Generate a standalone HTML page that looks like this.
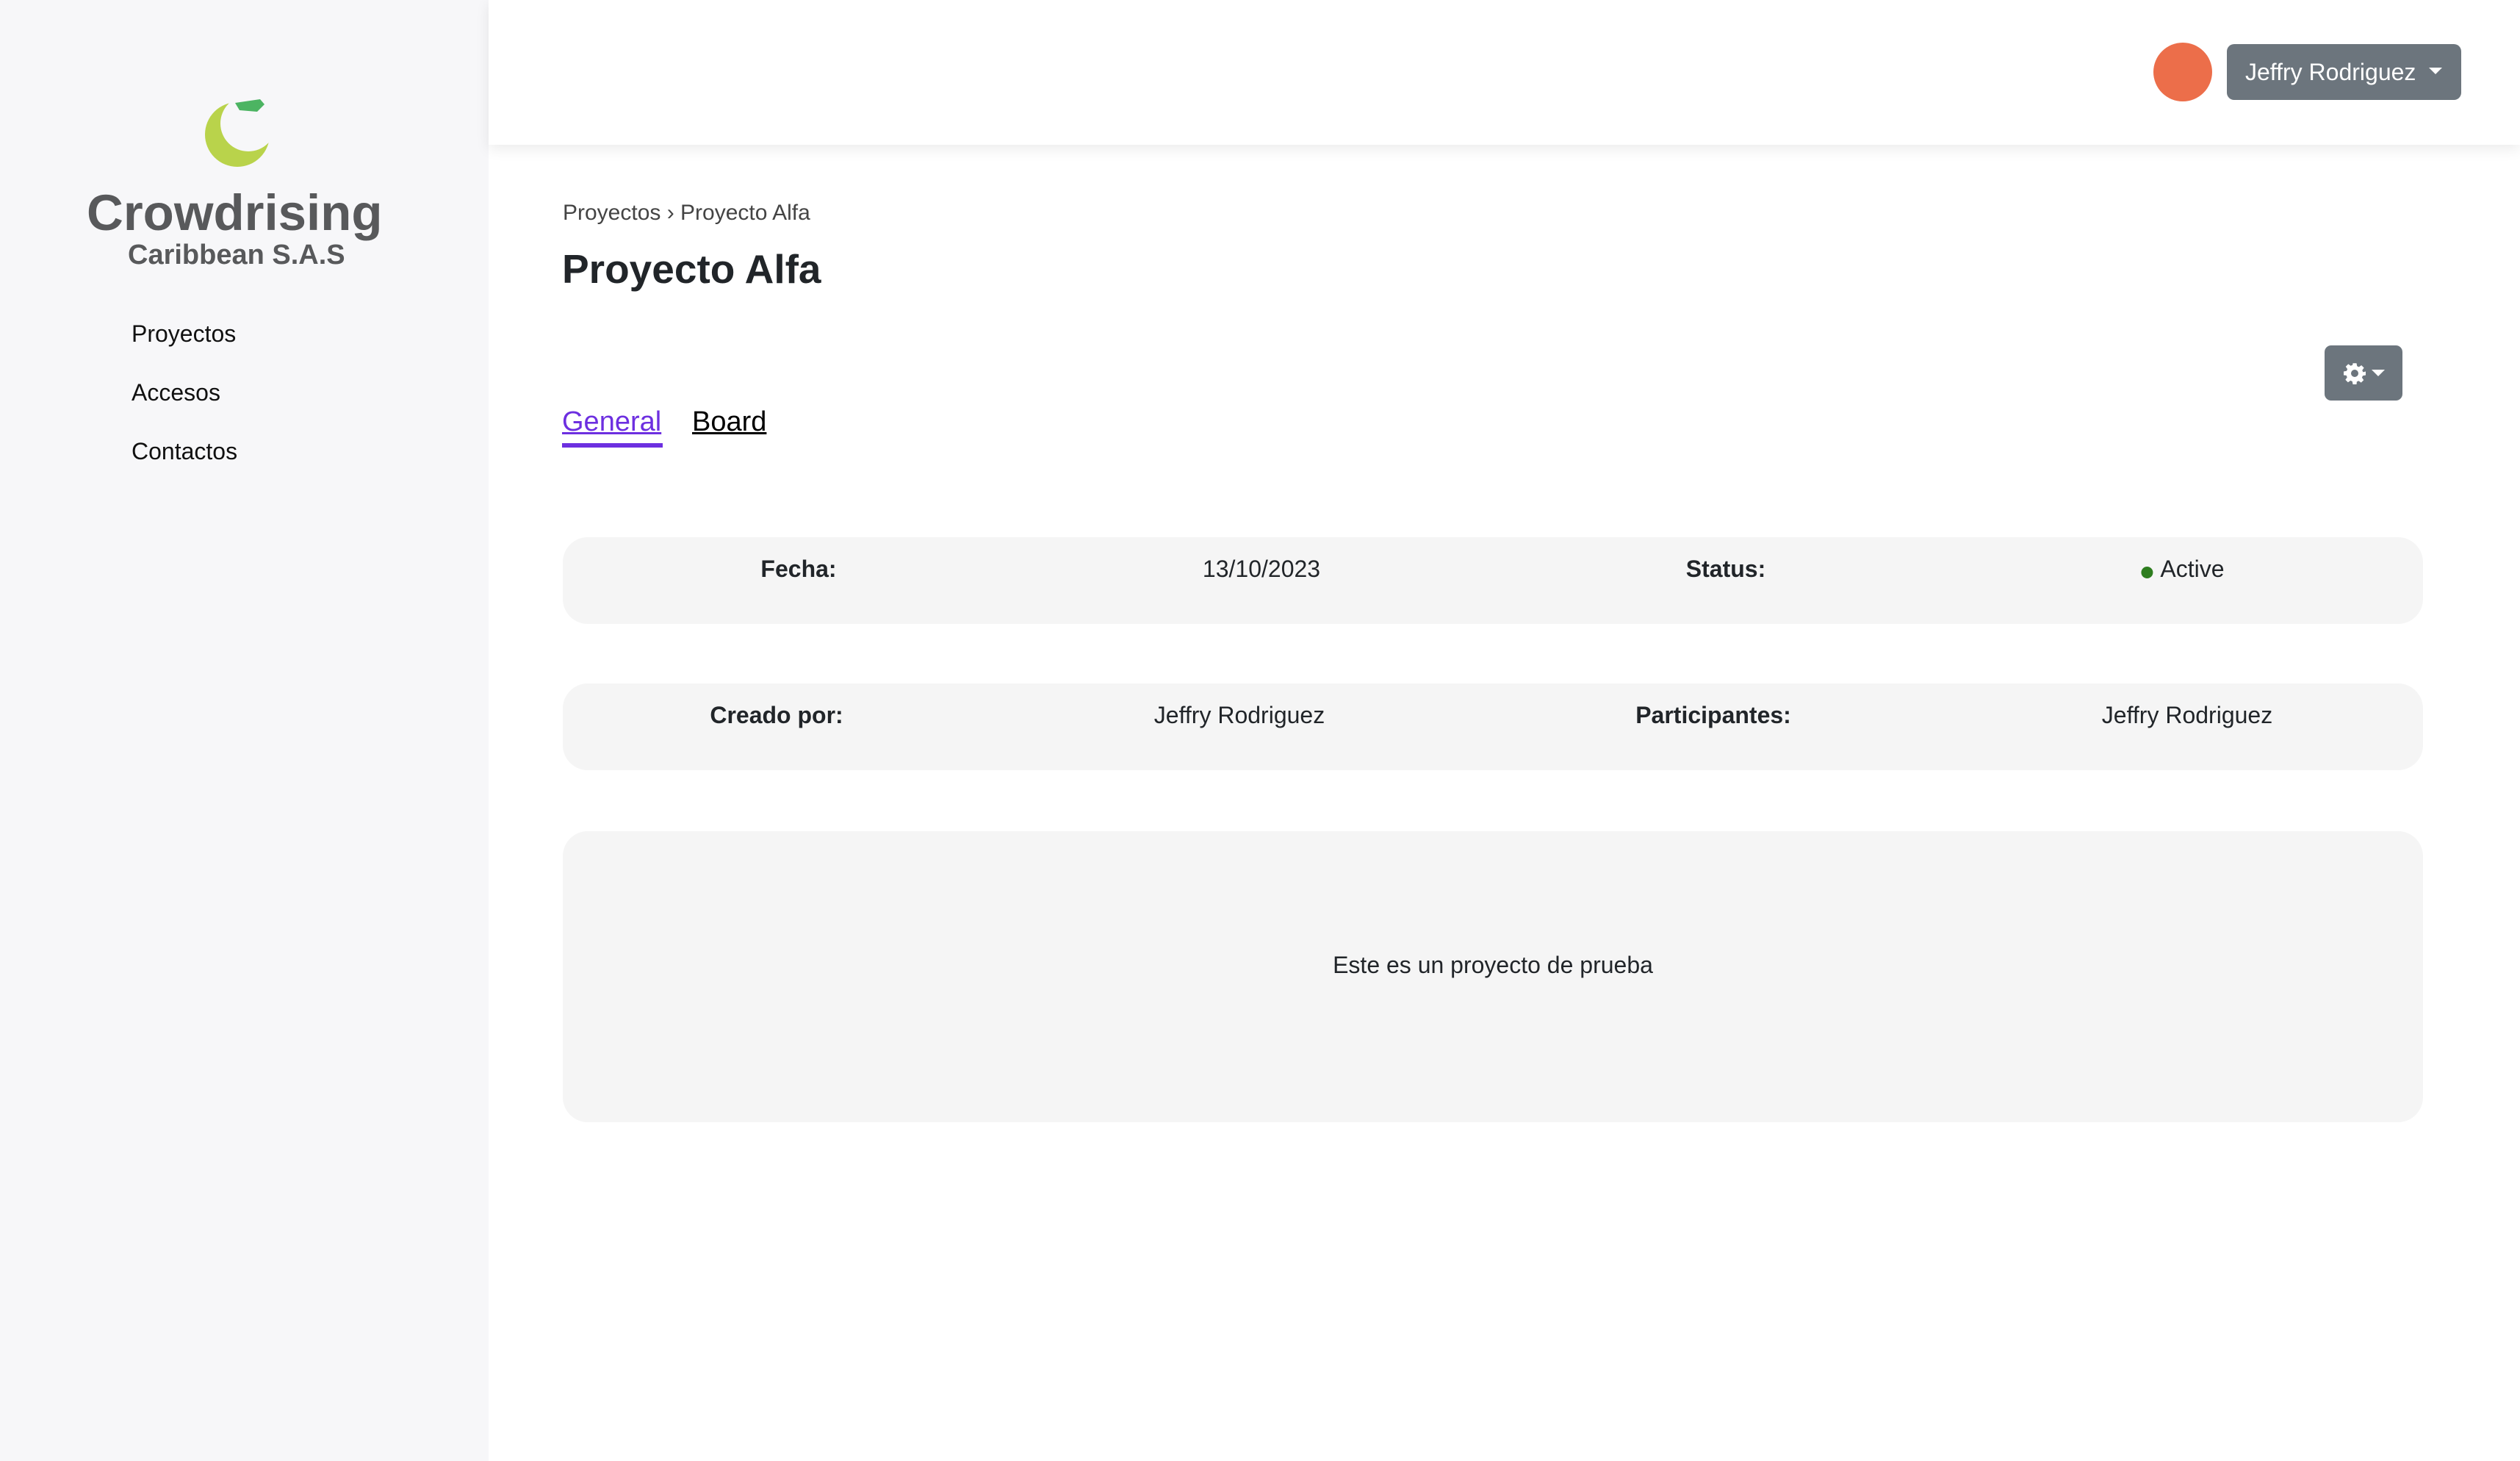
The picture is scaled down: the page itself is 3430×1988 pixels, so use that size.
<!DOCTYPE html>
<html><head><meta charset="utf-8"><style>
*{box-sizing:border-box;margin:0;padding:0}
body{width:3430px;height:1988px;position:relative;font-family:"Liberation Sans",Arial,sans-serif;background:#fff;overflow:hidden;color:#212529}
.side{position:absolute;left:0;top:0;width:665px;height:1988px;background:#f7f7f9}
.hdr{position:absolute;left:665px;top:0;right:0;height:197px;background:#fff;box-shadow:0 6px 18px rgba(0,0,0,0.08)}
.nav{position:absolute;left:179px;font-size:32px;color:#111}
.abs{position:absolute}
.card{position:absolute;left:766px;width:2532px;background:#f5f5f5;border-radius:34px}
.c{position:absolute;top:28px;transform:translateX(-50%);white-space:nowrap;font-size:32px;line-height:36px;color:#212529}
.c b{font-weight:bold}
</style></head><body>
<div class="side">
<svg class="abs" style="left:270px;top:130px" width="110" height="100" viewBox="0 0 110 100">
<defs><mask id="m"><rect width="110" height="100" fill="#fff"/><circle cx="68" cy="38" r="38" fill="#000"/></mask></defs>
<circle cx="53" cy="53" r="44" fill="#b9d34b" mask="url(#m)"/>
<path d="M50 10 L84 5 L90 12 L80 22 L56 20 Z" fill="#4cb462"/>
</svg>
<div class="abs" style="left:118px;top:250px;font-size:69px;font-weight:bold;color:#58595b">Crowdrising</div>
<div class="abs" style="left:174px;top:326px;font-size:38px;font-weight:bold;color:#58595b">Caribbean S.A.S</div>
<div class="nav" style="top:436px">Proyectos</div>
<div class="nav" style="top:516px">Accesos</div>
<div class="nav" style="top:596px">Contactos</div>
</div>
<div class="hdr"></div>
<div class="abs" style="left:2931px;top:58px;width:80px;height:80px;border-radius:50%;background:#ec6e4a"></div>
<div class="abs" style="left:3031px;top:60px;width:319px;height:76px;border-radius:10px;background:#6c757d;color:#fff;font-size:32px;line-height:76px;padding-left:25px">Jeffry Rodriguez<span style="position:absolute;right:26px;top:32px;border-left:9px solid transparent;border-right:9px solid transparent;border-top:9px solid #fff"></span></div>
<div class="abs" style="left:3164px;top:470px;width:106px;height:75px;border-radius:9px;background:#6c757d">
<svg class="abs" style="left:26px;top:23px" width="30" height="30" viewBox="0 0 24 24"><path fill="#fff" fill-rule="evenodd" d="M10 1h4l.6 3.2 2 .9 2.7-1.9 2.8 2.8-1.9 2.7.9 2L24 10v4l-3.2.6-.9 2 1.9 2.7-2.8 2.8-2.7-1.9-2 .9L14 24h-4l-.6-3.2-2-.9-2.7 1.9-2.8-2.8 1.9-2.7-.9-2L0 14v-4l3.2-.6.9-2L2.2 4.7 5 1.9l2.7 1.9 2-.9z M12 8a4 4 0 1 0 0 8a4 4 0 1 0 0-8z"/></svg>
<span class="abs" style="left:64px;top:33px;border-left:9px solid transparent;border-right:9px solid transparent;border-top:9px solid #fff"></span></div>
<div class="abs" style="left:766px;top:273px;font-size:30px;color:#444">Proyectos › Proyecto Alfa</div>
<div class="abs" style="left:765px;top:334px;font-size:55px;font-weight:bold;color:#212529">Proyecto Alfa</div>
<div class="abs" style="left:765px;top:553px;font-size:38px;color:#6d2fe0;text-decoration:underline">General</div>
<div class="abs" style="left:765px;top:603px;width:137px;height:6px;background:#6d2fe0"></div>
<div class="abs" style="left:942px;top:553px;font-size:38px;color:#000;text-decoration:underline">Board</div>
<div class="card" style="top:731px;height:118px">
<div class="c" style="left:321px;top:25px"><b>Fecha:</b></div>
<div class="c" style="left:951px;top:25px">13/10/2023</div>
<div class="c" style="left:1583px;top:25px"><b>Status:</b></div>
<div class="c" style="left:2205px;top:25px"><span style="display:inline-block;width:16px;height:16px;border-radius:50%;background:#2e7d1f;margin-right:10px;vertical-align:-2px"></span>Active</div>
</div>
<div class="card" style="top:930px;height:118px">
<div class="c" style="left:291px;top:25px"><b>Creado por:</b></div>
<div class="c" style="left:921px;top:25px">Jeffry Rodriguez</div>
<div class="c" style="left:1566px;top:25px"><b>Participantes:</b></div>
<div class="c" style="left:2211px;top:25px">Jeffry Rodriguez</div>
</div>
<div class="card" style="top:1131px;height:396px"><div style="position:absolute;left:0;right:0;top:164px;text-align:center;font-size:32px;line-height:36px">Este es un proyecto de prueba</div></div>
</body></html>
